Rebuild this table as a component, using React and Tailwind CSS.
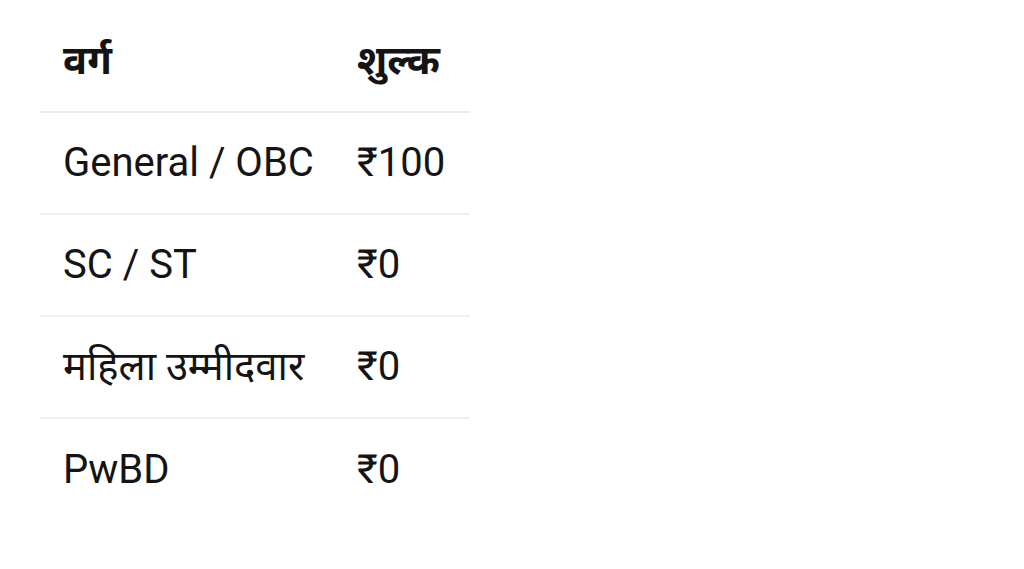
export default function App() {
  const rows = [
    ["General / OBC", "₹100"],
    ["SC / ST", "₹0"],
    ["महिला उम्मीदवार", "₹0"],
    ["PwBD", "₹0"],
  ];
  return (
    <div className="w-[1024px] h-[569px] bg-white pt-[11px] pl-[40px]" style={{ fontFamily: 'Roboto, "Noto Sans", sans-serif' }}>
      <div className="grid grid-cols-[317px_113px] w-[430px] text-[40px] leading-none text-[#141414]">
        <div className="h-[102px] flex items-center pl-[23px] font-bold border-b-2 border-[#ececec]">वर्ग</div>
        <div className="h-[102px] flex items-center font-bold border-b-2 border-[#ececec]">शुल्क</div>
        {rows.map(([a, b], i) => (
          <div key={i} className="contents">
            <div className={"h-[102px] flex items-center pl-[23px] " + (i < 3 ? "border-b-2 border-[#f0f0f0]" : "")}>{a}</div>
            <div className={"h-[102px] flex items-center " + (i < 3 ? "border-b-2 border-[#f0f0f0]" : "")}>{b}</div>
          </div>
        ))}
      </div>
    </div>
  );
}
